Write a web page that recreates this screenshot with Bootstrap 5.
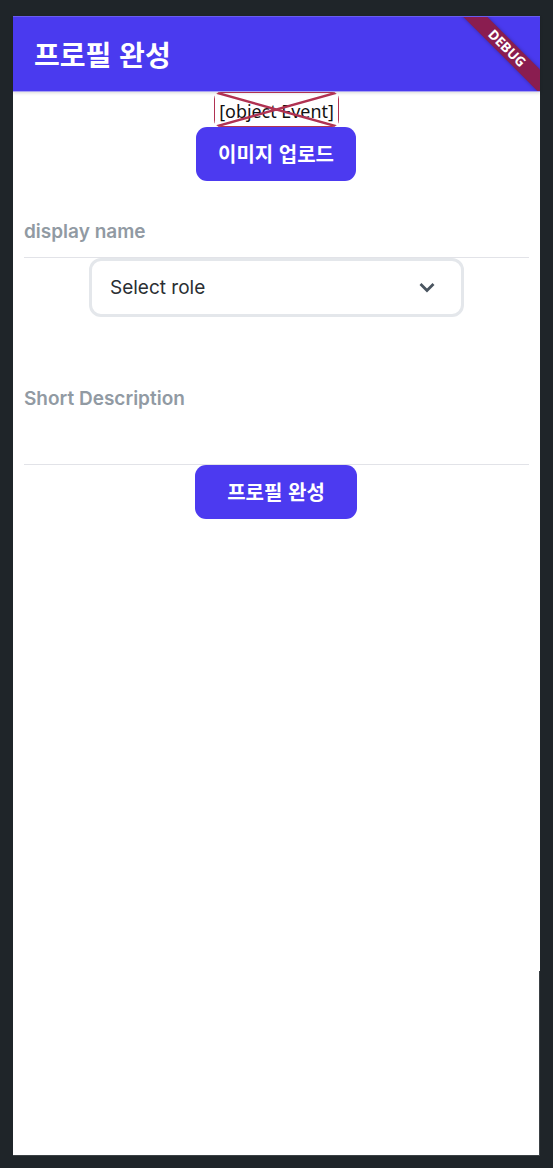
<!DOCTYPE html>
<html lang="ko">
<head>
<meta charset="utf-8">
<title>프로필 완성</title>
<link rel="stylesheet" href="https://cdn.jsdelivr.net/npm/bootstrap@5.3.0/dist/css/bootstrap.min.css">
<style>
html,body{height:100%;overflow:hidden}
body{background:#1f2529;padding:16px 13px 13px 13px;font-family:"Inter","Noto Sans CJK KR",sans-serif}
.phone{position:relative;width:527px;height:1139px;background:#fff;box-shadow:0 1px 0 #3b4145}
.phone::after{content:"";position:absolute;right:0;bottom:0;width:1px;height:184px;background:#3b4145}
.appbar{position:relative;overflow:hidden;height:76px;background:#4a3aef;border-top:1px solid #6a5cf0;border-bottom:1px solid #a9a3f2;padding-left:21px}
.appbar-shade{box-shadow:0 1px 3px rgba(0,0,0,.15)}
.appbar-title{font:700 28px/1 "Noto Sans CJK KR",sans-serif;color:#fff;margin:0 0 1px}
.broken{position:relative;width:125px;height:35px;font:400 17.900px/39px "Noto Sans","Open Sans",sans-serif;color:#111;white-space:nowrap;text-align:center}
.broken svg{position:absolute;inset:0;width:100%;height:100%;border-radius:7px}
.solid-btn{background:#4c3af0;color:#fff;border:0;border-radius:11px;font:700 20px/1 "Noto Sans CJK KR",sans-serif;height:54px;margin-right:1px;padding:0}
.solid-btn:hover,.solid-btn:active{background:#4c3af0;color:#fff}
.upload-btn{width:160px}
.finish-btn{width:162.600px}
.flat-field.form-control{font:600 19px/26px "Inter",sans-serif;padding:0;border:0;border-bottom:1px solid #e2e3e8;border-radius:0;box-shadow:none;background:transparent;resize:none}
.flat-field::placeholder{color:#919aa3;opacity:1}
.name-field.form-control{height:53px;margin-top:0}
.desc-field.form-control{height:80px;padding-top:1px;margin-top:68px}
.role-box{width:374.500px;height:59px;border:3px solid #e4e7eb;border-radius:12px;padding:0 25px 0 18px;font:400 19px/1 "Inter",sans-serif;color:#2b2f33;background:#fff;margin-right:.5px}
.fields{padding:0 11px}
.ribbon{position:absolute;top:23.400px;left:424.350px;width:140px;height:16.500px;transform:rotate(45deg);background:#8a1d50;color:#fff;font:700 13.500px/16.500px "Noto Sans",sans-serif;text-align:center;box-shadow:0 0 4px rgba(0,0,0,.3)}
</style>
</head>
<body>
<div class="phone d-flex flex-column">
  <header class="appbar appbar-shade d-flex align-items-center"><h1 class="appbar-title">프로필 완성</h1><div class="ribbon">DEBUG</div></header>
  <main class="d-flex flex-column align-items-center">
    <div class="broken">[object Event]
      <svg viewBox="0 0 125 35" preserveAspectRatio="none" aria-hidden="true"><path d="M0 0 125 35M125 0 0 35" fill="none" stroke="#b03252" stroke-width="2.500"/><rect width="125" height="35" fill="none" stroke="#b03252" stroke-width="2"/></svg>
    </div>
    <button type="button" class="btn solid-btn upload-btn">이미지 업로드</button>
    <div class="fields w-100 mt-4 d-flex flex-column align-items-center">
      <input class="form-control flat-field name-field" placeholder="display name">
      <div class="role-box d-flex align-items-center justify-content-between">
        <span>Select role</span>
        <svg width="18" height="11" viewBox="0 0 18 11" aria-hidden="true"><path d="M2.500 2 9 8.500 15.500 2" fill="none" stroke="#4a5560" stroke-width="2.800"/></svg>
      </div>
      <textarea class="form-control flat-field desc-field" placeholder="Short Description"></textarea>
      <button type="button" class="btn solid-btn finish-btn">프로필 완성</button>
    </div>
  </main>
</div>
<script src="https://cdn.jsdelivr.net/npm/bootstrap@5.3.0/dist/js/bootstrap.bundle.min.js"></script>
</body>
</html>
